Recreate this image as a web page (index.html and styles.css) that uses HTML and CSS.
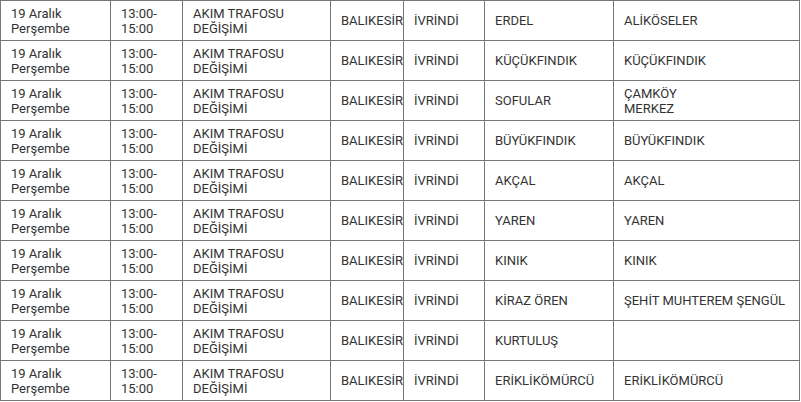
FILE: index.html
```html
<!DOCTYPE html>
<html lang="tr">
<head>
<meta charset="utf-8">
<link rel="stylesheet" href="styles.css">
</head>
<body>
<table class="outages">
  <colgroup>
    <col class="c-date"><col class="c-time"><col class="c-reason"><col class="c-city"><col class="c-town"><col class="c-quarter"><col class="c-street">
  </colgroup>
  <tbody>
    <tr><td>19 Aralık Perşembe</td><td>13:00-15:00</td><td>AKIM TRAFOSU DEĞİŞİMİ</td><td>BALIKESİR</td><td>İVRİNDİ</td><td>ERDEL</td><td>ALİKÖSELER</td></tr>
    <tr><td>19 Aralık Perşembe</td><td>13:00-15:00</td><td>AKIM TRAFOSU DEĞİŞİMİ</td><td>BALIKESİR</td><td>İVRİNDİ</td><td>KÜÇÜKFINDIK</td><td>KÜÇÜKFINDIK</td></tr>
    <tr><td>19 Aralık Perşembe</td><td>13:00-15:00</td><td>AKIM TRAFOSU DEĞİŞİMİ</td><td>BALIKESİR</td><td>İVRİNDİ</td><td>SOFULAR</td><td>ÇAMKÖY<br>MERKEZ</td></tr>
    <tr><td>19 Aralık Perşembe</td><td>13:00-15:00</td><td>AKIM TRAFOSU DEĞİŞİMİ</td><td>BALIKESİR</td><td>İVRİNDİ</td><td>BÜYÜKFINDIK</td><td>BÜYÜKFINDIK</td></tr>
    <tr><td>19 Aralık Perşembe</td><td>13:00-15:00</td><td>AKIM TRAFOSU DEĞİŞİMİ</td><td>BALIKESİR</td><td>İVRİNDİ</td><td>AKÇAL</td><td>AKÇAL</td></tr>
    <tr><td>19 Aralık Perşembe</td><td>13:00-15:00</td><td>AKIM TRAFOSU DEĞİŞİMİ</td><td>BALIKESİR</td><td>İVRİNDİ</td><td>YAREN</td><td>YAREN</td></tr>
    <tr><td>19 Aralık Perşembe</td><td>13:00-15:00</td><td>AKIM TRAFOSU DEĞİŞİMİ</td><td>BALIKESİR</td><td>İVRİNDİ</td><td>KINIK</td><td>KINIK</td></tr>
    <tr><td>19 Aralık Perşembe</td><td>13:00-15:00</td><td>AKIM TRAFOSU DEĞİŞİMİ</td><td>BALIKESİR</td><td>İVRİNDİ</td><td>KİRAZ ÖREN</td><td>ŞEHİT MUHTEREM ŞENGÜL</td></tr>
    <tr><td>19 Aralık Perşembe</td><td>13:00-15:00</td><td>AKIM TRAFOSU DEĞİŞİMİ</td><td>BALIKESİR</td><td>İVRİNDİ</td><td>KURTULUŞ</td><td></td></tr>
    <tr><td>19 Aralık Perşembe</td><td>13:00-15:00</td><td>AKIM TRAFOSU DEĞİŞİMİ</td><td>BALIKESİR</td><td>İVRİNDİ</td><td>ERİKLİKÖMÜRCÜ</td><td>ERİKLİKÖMÜRCÜ</td></tr>
  </tbody>
</table>
</body>
</html>
```

FILE: styles.css
```css
html, body {
  margin: 0;
  padding: 0;
  background: #ffffff;
}
.outages {
  border-collapse: collapse;
  table-layout: fixed;
  width: 799px;
  font-family: Roboto, "Liberation Sans", sans-serif;
  font-size: 13px;
  line-height: 15px;
  color: #333333;
}
.outages td {
  border: 1px solid #777777;
  padding: 0 10px;
  height: 39px;
  vertical-align: middle;
  text-align: left;
  white-space: normal;
}
.c-date { width: 110px; }
.c-time { width: 72px; }
.c-reason { width: 148px; }
.c-city { width: 73px; }
.c-town { width: 81px; }
.c-quarter { width: 129px; }
.c-street { width: 186px; }
```
